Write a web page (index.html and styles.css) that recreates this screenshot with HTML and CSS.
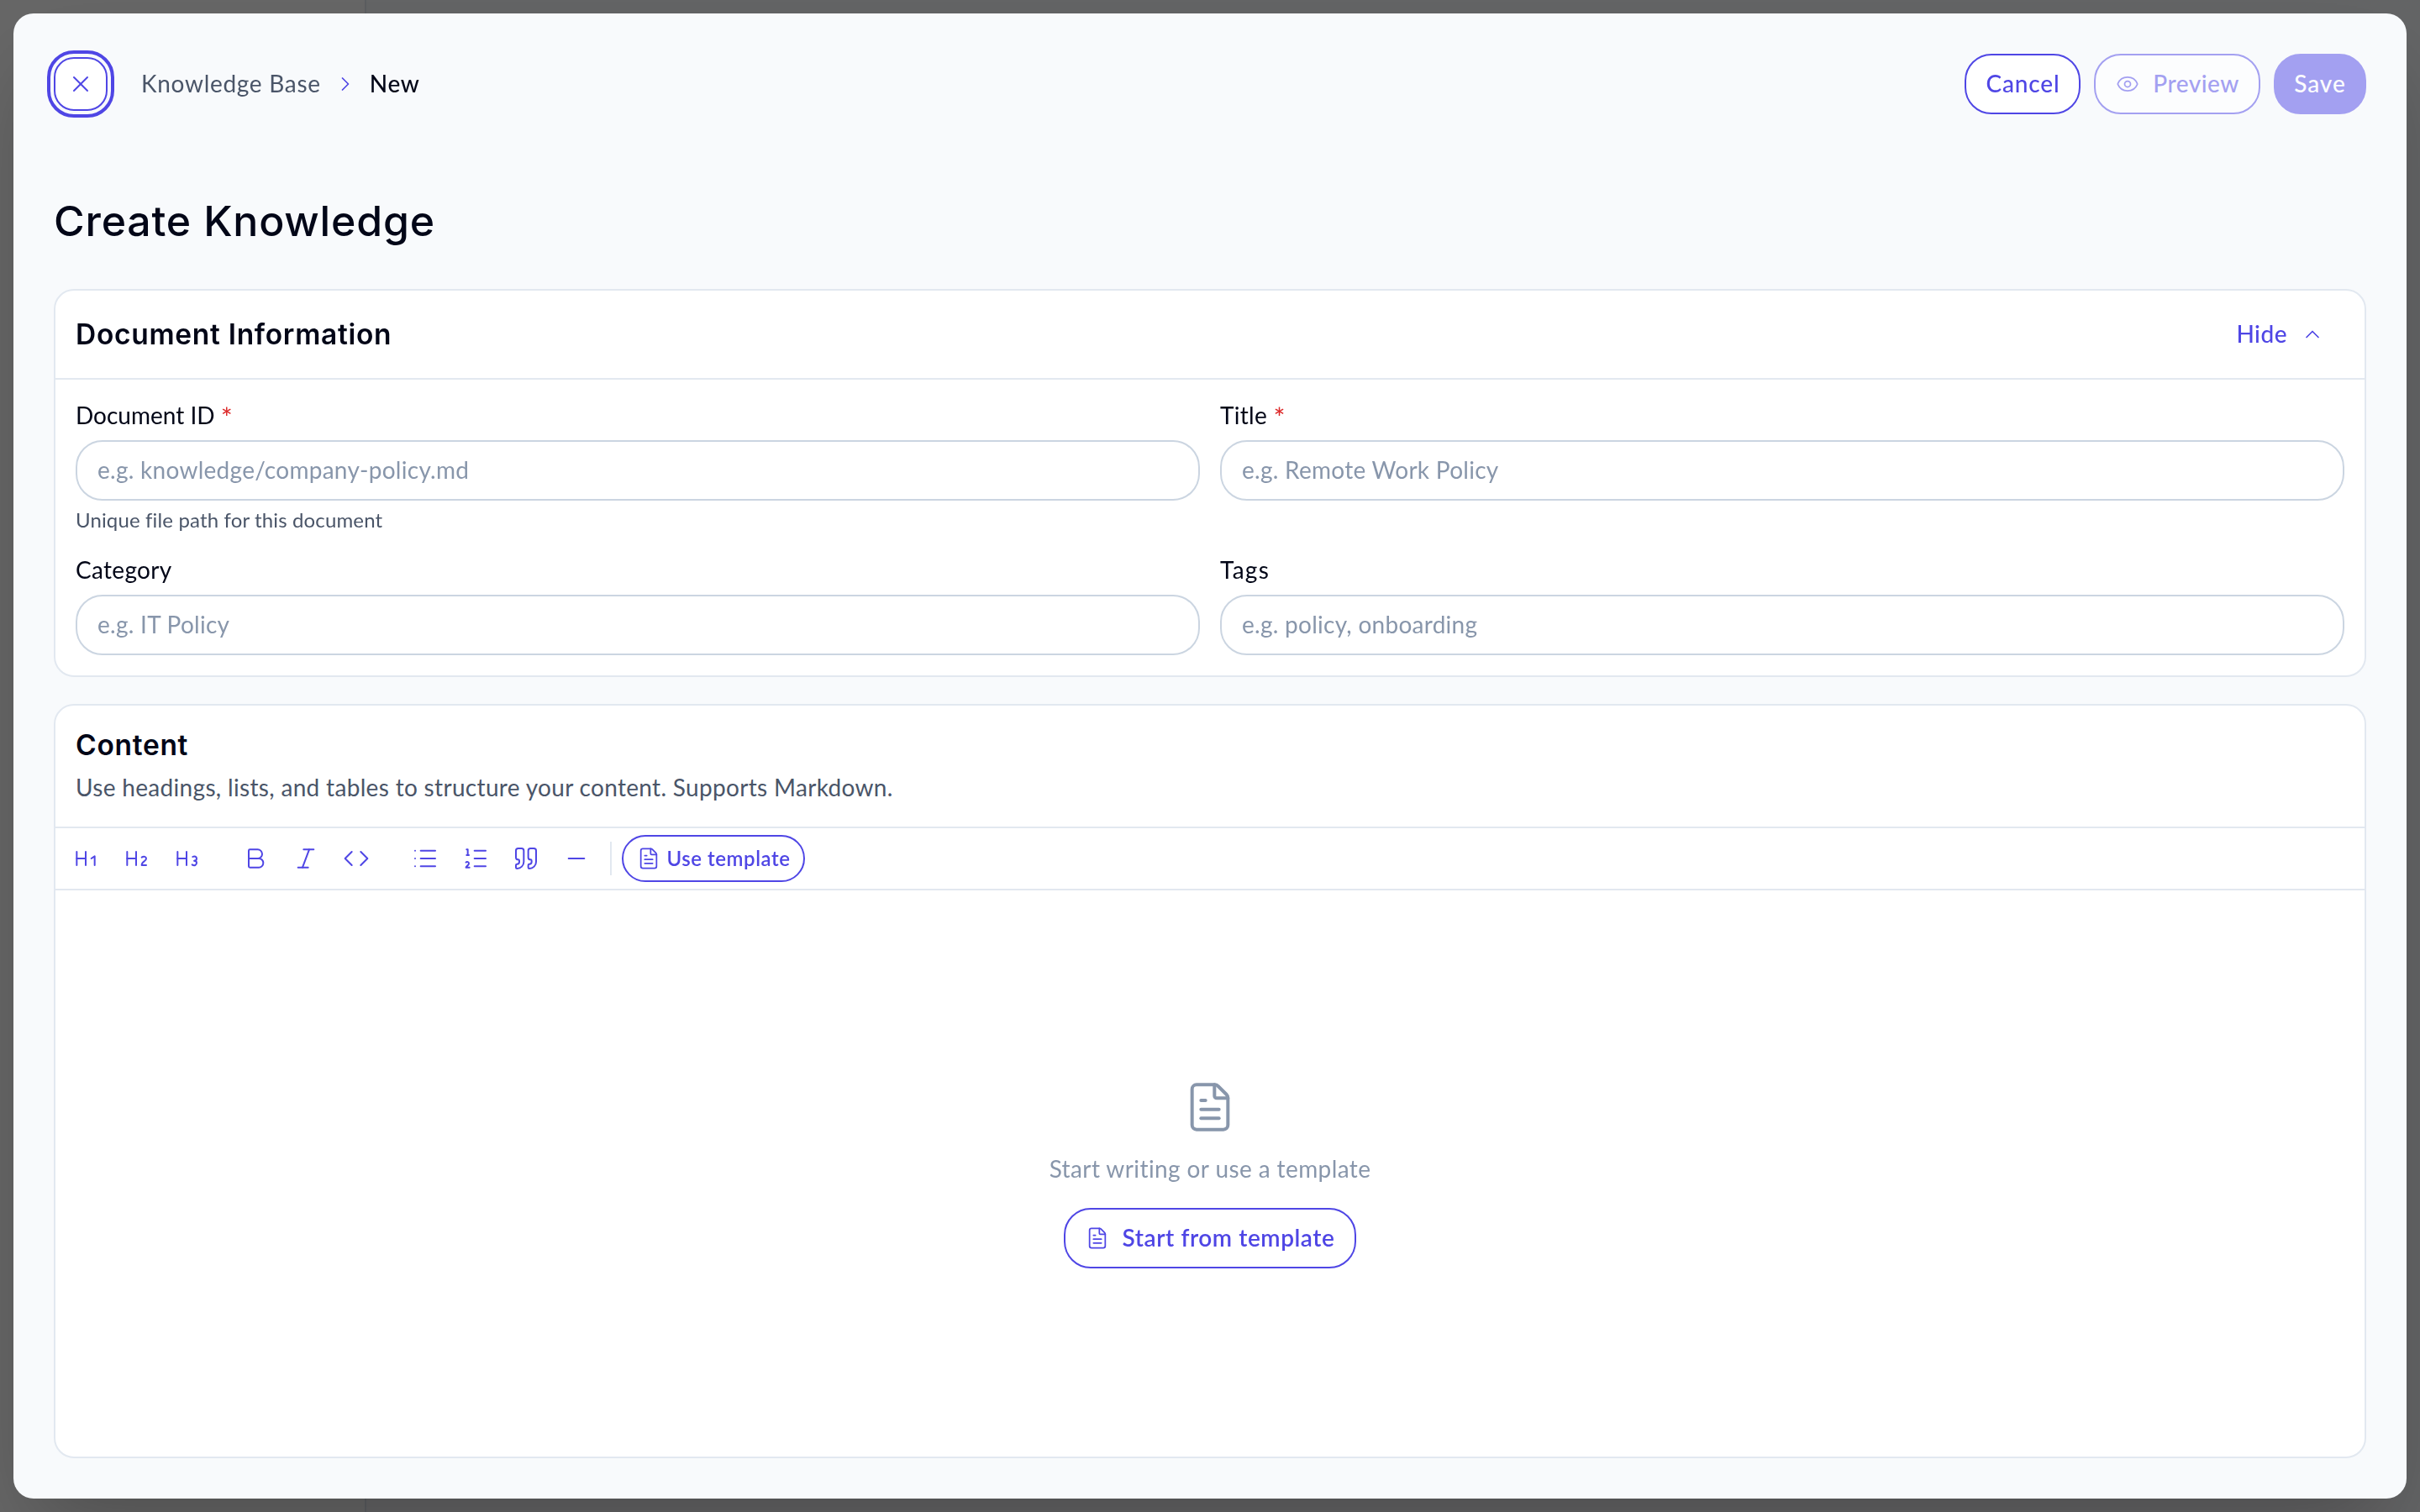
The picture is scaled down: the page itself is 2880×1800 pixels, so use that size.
FILE: index.html
```html
<!DOCTYPE html>
<html lang="en">
<head>
  <meta charset="UTF-8">
  <meta name="viewport" content="width=device-width, initial-scale=1.0">
  <title>Create Knowledge</title>
  <link rel="stylesheet" href="styles.css">
</head>
<body>
  <svg class="sprite" aria-hidden="true">
    <symbol id="file-text" viewBox="0 0 24 24">
      <path d="M6 22a2 2 0 0 1-2-2V4a2 2 0 0 1 2-2h8a2.4 2.4 0 0 1 1.704.706l3.588 3.588A2.4 2.4 0 0 1 20 8v12a2 2 0 0 1-2 2z"/>
      <path d="M14 2v5a1 1 0 0 0 1 1h5"/>
      <path d="M10 9H8"/><path d="M16 13H8"/><path d="M16 17H8"/>
    </symbol>
  </svg>

  <!-- page behind the dialog -->
  <div class="shell">
    <div class="sidebar"></div>
  </div>

  <div class="overlay">
    <div class="modal">
      <header class="topbar">
        <button class="btn close" aria-label="Close">
          <svg class="icon icon-md" viewBox="0 0 24 24"><path d="M18 6 6 18"/><path d="m6 6 12 12"/></svg>
        </button>
        <nav class="breadcrumb">
          <span class="crumb">Knowledge Base</span>
          <svg class="icon" viewBox="0 0 24 24"><path d="m9 18 6-6-6-6"/></svg>
          <span class="crumb current">New</span>
        </nav>
        <div class="actions">
          <button class="btn cancel">Cancel</button>
          <button class="btn preview" disabled>
            <svg class="icon" viewBox="0 0 24 24"><path d="M2.062 12.348a1 1 0 0 1 0-.696 10.75 10.75 0 0 1 19.876 0 1 1 0 0 1 0 .696 10.75 10.75 0 0 1-19.876 0"/><circle cx="12" cy="12" r="3"/></svg>
            Preview
          </button>
          <button class="btn save" disabled>Save</button>
        </div>
      </header>

      <h1>Create Knowledge</h1>

      <section class="card">
        <div class="card-header info-header">
          <h2>Document Information</h2>
          <button class="hide">
            Hide
            <svg class="icon" viewBox="0 0 24 24"><path d="m18 15-6-6-6 6"/></svg>
          </button>
        </div>
        <div class="form">
          <div class="field">
            <label class="label-id" for="doc-id">Document ID <span class="required">*</span></label>
            <input id="doc-id" type="text" placeholder="e.g. knowledge/company-policy.md">
            <p class="hint">Unique file path for this document</p>
          </div>
          <div class="field">
            <label for="title">Title <span class="required">*</span></label>
            <input id="title" type="text" placeholder="e.g. Remote Work Policy">
          </div>
          <div class="field">
            <label for="category">Category</label>
            <input id="category" type="text" placeholder="e.g. IT Policy">
          </div>
          <div class="field">
            <label class="label-tags" for="tags">Tags</label>
            <input id="tags" type="text" placeholder="e.g. policy, onboarding">
          </div>
        </div>
      </section>

      <section class="card editor">
        <div class="card-header content-header">
          <h2>Content</h2>
          <p>Use headings, lists, and tables to structure your content. Supports Markdown.</p>
        </div>
        <div class="toolbar">
          <div class="tools">
            <button class="tool" title="Heading 1"><svg class="icon icon-md" viewBox="0 0 24 24"><path d="M4 12h8"/><path d="M4 18V6"/><path d="M12 18V6"/><path d="m17 12 3-2v8"/></svg></button>
            <button class="tool" title="Heading 2"><svg class="icon icon-md" viewBox="0 0 24 24"><path d="M4 12h8"/><path d="M4 18V6"/><path d="M12 18V6"/><path d="M21 18h-4c0-4 4-3 4-6 0-1.5-2-2.5-4-1"/></svg></button>
            <button class="tool" title="Heading 3"><svg class="icon icon-md" viewBox="0 0 24 24"><path d="M4 12h8"/><path d="M4 18V6"/><path d="M12 18V6"/><path d="M17.5 10.5c1.7-1 3.5 0 3.5 1.5a2 2 0 0 1-2 2"/><path d="M17 17.5c2 1.5 4 .3 4-1.5a2 2 0 0 0-2-2"/></svg></button>
          </div>
          <div class="tools">
            <button class="tool" title="Bold"><svg class="icon icon-md" viewBox="0 0 24 24"><path d="M6 12h9a4 4 0 0 1 0 8H7a1 1 0 0 1-1-1V5a1 1 0 0 1 1-1h7a4 4 0 0 1 0 8"/></svg></button>
            <button class="tool" title="Italic"><svg class="icon icon-md" viewBox="0 0 24 24"><path d="M19 4h-9"/><path d="M14 20H5"/><path d="M15 4 9 20"/></svg></button>
            <button class="tool" title="Code"><svg class="icon icon-md" viewBox="0 0 24 24"><path d="m16 18 6-6-6-6"/><path d="m8 6-6 6 6 6"/></svg></button>
          </div>
          <div class="tools">
            <button class="tool" title="Bullet list"><svg class="icon icon-md" viewBox="0 0 24 24"><path d="M3 5h.01"/><path d="M3 12h.01"/><path d="M3 19h.01"/><path d="M8 5h13"/><path d="M8 12h13"/><path d="M8 19h13"/></svg></button>
            <button class="tool" title="Numbered list"><svg class="icon icon-md" viewBox="0 0 24 24"><path d="M11 5h10"/><path d="M11 12h10"/><path d="M11 19h10"/><path d="M4 4h1v5"/><path d="M4 9h2"/><path d="M6.5 20H3.4c0-1 2.6-1.925 2.6-3.5a1.5 1.5 0 0 0-2.6-1.02"/></svg></button>
            <button class="tool" title="Quote"><svg class="icon icon-md" viewBox="0 0 24 24"><path d="M16 3a2 2 0 0 0-2 2v6a2 2 0 0 0 2 2 1 1 0 0 1 1 1v1a2 2 0 0 1-2 2 1 1 0 0 0-1 1v2a1 1 0 0 0 1 1 6 6 0 0 0 6-6V5a2 2 0 0 0-2-2z"/><path d="M5 3a2 2 0 0 0-2 2v6a2 2 0 0 0 2 2 1 1 0 0 1 1 1v1a2 2 0 0 1-2 2 1 1 0 0 0-1 1v2a1 1 0 0 0 1 1 6 6 0 0 0 6-6V5a2 2 0 0 0-2-2z"/></svg></button>
            <button class="tool" title="Divider"><svg class="icon icon-md" viewBox="0 0 24 24"><path d="M5 12h14"/></svg></button>
          </div>
          <span class="separator"></span>
          <button class="btn use-template"><svg class="icon"><use href="#file-text"/></svg>Use template</button>
        </div>
        <div class="empty">
          <svg class="icon icon-xl"><use href="#file-text"/></svg>
          <p>Start writing or use a template</p>
          <button class="btn start-template"><svg class="icon"><use href="#file-text"/></svg>Start from template</button>
        </div>
      </section>
    </div>
  </div>
</body>
</html>
```
FILE: styles.css
```css
:root {
  --primary: #4f46e5;
  --text: #020617;
  --muted: #4a5568;
  --placeholder: #8896ab;
  --border: #e2e8f0;
}

* { box-sizing: border-box; }

body {
  margin: 0;
  height: 100vh;
  overflow: hidden;
  font-family: Lato, "Open Sans", sans-serif;
  font-size: 28px;
  line-height: 40px;
  letter-spacing: 0.3px;
  color: var(--text);
}

h1, h2, p { margin: 0; }
h1, h2 { font-family: Inter, sans-serif; color: var(--text); }

.sprite { display: none; }

.shell { display: flex; height: 100vh; background: #f8fafc; }
.sidebar { width: 436px; background: #fff; border-right: 2px solid var(--border); }

.overlay {
  position: fixed;
  inset: 0;
  padding: 16px;
  background: rgba(0, 0, 0, 0.6);
}

.modal {
  display: flex;
  flex-direction: column;
  height: 100%;
  padding: 48px;
  background: #f8fafc;
  border-radius: 24px;
  box-shadow: 0 50px 100px -24px rgba(0, 0, 0, 0.25);
}

/* icons */
.icon {
  flex: none;
  width: 28px;
  height: 28px;
  fill: none;
  stroke: currentColor;
  stroke-width: 1.5;
  stroke-linecap: round;
  stroke-linejoin: round;
}
.icon-md { width: 32px; height: 32px; }
.icon-xl { width: 64px; height: 64px; }

/* buttons */
button { font: inherit; letter-spacing: inherit; padding: 0; border: none; background: none; color: var(--primary); }

.btn {
  display: flex;
  align-items: center;
  justify-content: center;
  gap: 16px;
  height: 72px;
  padding-bottom: 3px;
  border: 2px solid var(--primary);
  border-radius: 32px;
  background: #fff;
  font-weight: 500;
}
.btn .icon { margin-top: 3px; }
.btn:disabled { opacity: 0.5; }

.close {
  width: 64px;
  height: 64px;
  border-radius: 24px;
  outline: 4px solid var(--primary);
  outline-offset: 4px;
}
.cancel { width: 138px; padding-left: 1px; letter-spacing: 0.84px; }
.preview { width: 198px; padding-left: 1px; letter-spacing: 0.5px; }
.save { width: 110px; background: var(--primary); color: #fff; letter-spacing: 0.92px; }

/* top bar */
.topbar { display: flex; align-items: center; height: 72px; }
.breadcrumb { display: flex; align-items: center; gap: 15px; margin-left: 40px; color: var(--primary); }
.crumb { padding-bottom: 3px; color: var(--muted); letter-spacing: 0.7px; }
.current { color: var(--text); font-weight: 500; }
.actions { display: flex; gap: 16px; margin-left: auto; }

h1 {
  margin: 92px 0 46px;
  font-size: 50px;
  line-height: 70px;
  font-weight: 500;
  letter-spacing: 0.8px;
}

/* cards */
.card {
  border: 2px solid var(--border);
  border-radius: 24px;
  background: #fff;
}
.card-header { border-bottom: 2px solid var(--border); padding: 0 24px; }
.card-header h2 { font-size: 33.5px; line-height: 44px; font-weight: 600; letter-spacing: 0.7px; }

.info-header { display: flex; align-items: center; justify-content: space-between; height: 106px; }
.hide { display: flex; align-items: center; gap: 16px; padding: 0 24px 3px; font-weight: 500; letter-spacing: 0.5px; }
.hide .icon { margin-top: 3px; }

.form { display: grid; grid-template-columns: 1fr 1fr; gap: 24px; padding: 24px; }
.field label { display: block; margin: -2px 0 10px; }
.field .label-id { letter-spacing: 0; }
.field .label-tags { letter-spacing: 1.3px; }
.required { font-size: 33px; line-height: 0; vertical-align: -4px; color: #dc2626; }
.field input {
  display: block;
  width: 100%;
  height: 72px;
  padding: 0 24px 3px;
  border: 2px solid #cbd5e1;
  border-radius: 32px;
  background: #fff;
  font: inherit;
  letter-spacing: 0.27px;
}
.field input::placeholder { color: var(--placeholder); opacity: 1; }
.hint { margin: 5px 0 -1px; font-size: 24px; line-height: 36px; letter-spacing: 0.14px; color: var(--muted); }

/* editor */
.editor { display: flex; flex-direction: column; flex: 1; margin-top: 32px; }
.content-header { height: 146px; padding-top: 25px; }
.content-header p { margin-top: 8px; color: var(--muted); letter-spacing: 0.32px; }

.toolbar {
  display: flex;
  align-items: center;
  height: 74px;
  padding-left: 8px;
  border-bottom: 2px solid var(--border);
}
.tools { display: flex; gap: 4px; }
.tools + .tools { margin-left: 26px; }
.tool { display: flex; align-items: center; justify-content: center; width: 56px; height: 56px; }
.separator { width: 2px; height: 40px; margin: 0 12px; background: var(--border); }
.use-template { width: 218px; height: 56px; padding-bottom: 1px; border-radius: 28px; gap: 8px; font-size: 24px; font-weight: 600; letter-spacing: 0.54px; }
.use-template .icon { margin-top: 1px; }

.empty { display: flex; flex: 1; flex-direction: column; align-items: center; justify-content: center; padding-top: 2px; color: var(--placeholder); }
.empty p { margin: 21px 0 27px; letter-spacing: 0.4px; }
.start-template { width: 348px; font-weight: 600; letter-spacing: 0.56px; }
```
